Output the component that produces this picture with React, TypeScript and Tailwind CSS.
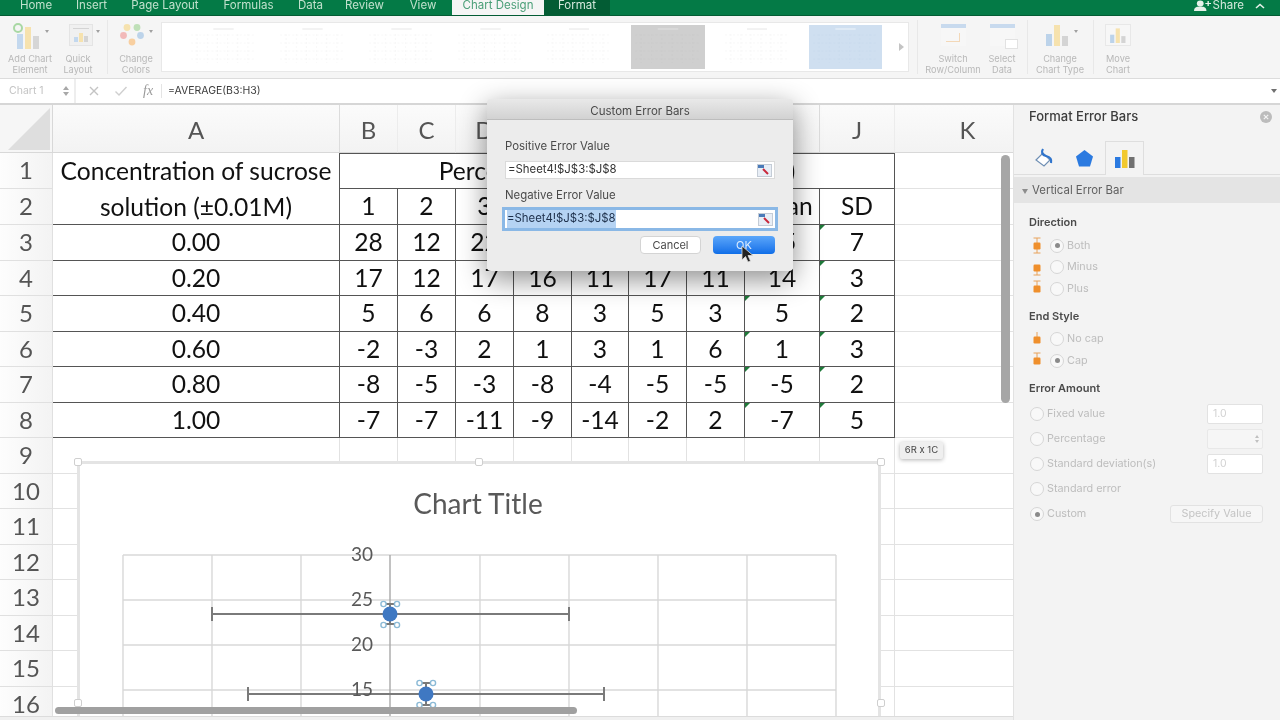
import React from "react";

const SANS = "font-['Inter','Liberation_Sans',sans-serif]";

const rowsData: string[][] = [
  ["0.00", "28", "12", "22", "17", "21", "13", "9", "15", "7"],
  ["0.20", "17", "12", "17", "16", "11", "17", "11", "14", "3"],
  ["0.40", "5", "6", "6", "8", "3", "5", "3", "5", "2"],
  ["0.60", "-2", "-3", "2", "1", "3", "1", "6", "1", "3"],
  ["0.80", "-8", "-5", "-3", "-8", "-4", "-5", "-5", "-5", "2"],
  ["1.00", "-7", "-7", "-11", "-9", "-14", "-2", "2", "-7", "5"],
];

const colHeads = ["A", "B", "C", "D", "E", "F", "G", "H", "I", "J", "K"];
const colTemplate = "grid-cols-[53px_287px_58px_58px_58px_58px_57px_58px_58px_75px_75px_146px]";

function Tab({ label, w, active, dark }: { label: string; w: string; active?: boolean; dark?: boolean }) {
  return (
    <div
      className={`${w} h-full flex items-end justify-center pb-[4px] text-[11.5px] leading-[11px] whitespace-nowrap ${
        active ? "bg-[#f5f5f5] text-[#4b9f78]" : dark ? "bg-[#035c34] text-[#d5e8dc]" : "text-[#c0e0cc]"
      }`}
    >
      {label}
    </div>
  );
}

function RibbonButton({ lines, w, children }: { lines: string[]; w: string; children: React.ReactNode }) {
  return (
    <div className={`${w} flex flex-col items-center shrink-0`}>
      <div className="h-[30px] flex items-center justify-center">{children}</div>
      <div className="mt-[4px] text-[9.2px] leading-[10.5px] text-[#b8b8b8] text-center whitespace-nowrap">
        {lines.map((l) => (
          <div key={l}>{l}</div>
        ))}
      </div>
    </div>
  );
}

function Bars({ s = 1 }: { s?: number }) {
  return (
    <svg width={28 * s} height={24 * s} viewBox="0 0 28 24">
      <rect x="3" y="11" width="6" height="12" fill="#bcd3ea" />
      <rect x="11" y="2" width="6" height="21" fill="#f6e2ae" />
      <rect x="19" y="13" width="6" height="10" fill="#d4d4d4" />
    </svg>
  );
}

function Caret() {
  return <span className="ml-[3px] mb-[8px] w-0 h-0 border-l-[2.5px] border-r-[2.5px] border-t-[3px] border-l-transparent border-r-transparent border-t-[#a0a0a0]" />;
}

function Thumb({ w, className = "bg-white", line = "#f3f3f3", title = "#e6e6e6" }: { w: string; className?: string; line?: string; title?: string }) {
  return (
    <div className={`${w} h-[44px] shrink-0 ${className}`}>
      <svg width="100%" height="100%" viewBox="0 0 72 44" preserveAspectRatio="none">
        <line x1="26" y1="4" x2="46" y2="4" stroke={title} strokeWidth="1" />
        {[10, 18, 26, 34].map((y) => (
          <line key={y} x1="4" y1={y} x2="68" y2={y} stroke={line} strokeWidth="0.6" strokeDasharray="2 2" />
        ))}
        {[10, 20, 30, 40, 50, 60].map((x) => (
          <line key={x} x1={x} y1="9" x2={x} y2="38" stroke={line} strokeWidth="0.6" strokeDasharray="2 2" />
        ))}
      </svg>
    </div>
  );
}

function Sep() {
  return <div className="w-px h-[54px] bg-[#e8e8e8] shrink-0" />;
}

function Ribbon() {
  return (
    <div className="h-[63px] bg-[#f5f5f5] border-b border-[#dcdcdc] flex items-start pt-[4px] shrink-0">
      <RibbonButton lines={["Add Chart", "Element"]} w="w-[60px]">
        <svg width="30" height="28" viewBox="0 0 30 28" className="mt-[2px]">
          <rect x="5" y="12" width="6" height="15" fill="#c3d8ee" />
          <rect x="13" y="5" width="6" height="22" fill="#f6e2ae" />
          <rect x="21" y="14" width="6" height="13" fill="#d6d6d6" />
          <circle cx="6" cy="6" r="4" fill="none" stroke="#a9d8a4" strokeWidth="2" />
        </svg>
        <Caret />
      </RibbonButton>
      <RibbonButton lines={["Quick", "Layout"]} w="w-[36px]">
        <div className="flex items-center ml-[12px]">
          <div className="w-[24px] h-[22px] bg-[#f0f0f0] border border-[#e4e4e4] flex items-end justify-center gap-[1px] pb-[3px] relative">
            <div className="absolute top-[3px] left-[3px] right-[3px] h-px bg-[#d4d4d4]" />
            <div className="w-[4px] h-[5px] bg-[#c3d8ee]" />
            <div className="w-[4px] h-[9px] bg-[#f6e2ae]" />
            <div className="w-[4px] h-[6px] bg-[#d4d4d4]" />
          </div>
          <Caret />
        </div>
      </RibbonButton>
      <div className="w-[11px] shrink-0" />
      <Sep />
      <RibbonButton lines={["Change", "Colors"]} w="w-[50px] ml-[3px]">
        <svg width="26" height="24" viewBox="0 0 26 24">
          <circle cx="7" cy="4.5" r="3.4" fill="#f6e2ae" />
          <circle cx="17" cy="4.5" r="3.4" fill="#bfe0b8" />
          <circle cx="3.5" cy="12.5" r="3.4" fill="#f2b9b9" />
          <circle cx="20.5" cy="12.5" r="3.4" fill="#bcd3ea" />
          <circle cx="12" cy="19" r="3.4" fill="#f8cfa0" />
        </svg>
        <Caret />
      </RibbonButton>
      <div className="mt-[2px] w-[748px] h-[50px] bg-white border border-[#e8e8e8] flex items-center gap-[16px] pl-[25px] shrink-0">
        <Thumb w="w-[73px]" />
        <Thumb w="w-[73px]" />
        <Thumb w="w-[73px]" />
        <Thumb w="w-[73px]" />
        <Thumb w="w-[72px]" />
        <Thumb w="w-[74px]" className="bg-[#cfcfcf]" line="#cacaca" title="#e0e0e0" />
        <Thumb w="w-[72px]" />
        <Thumb w="w-[73px]" className="bg-[#cfdff0]" line="#c8daec" title="#eef4fa" />
        <span className="ml-[1px] w-0 h-0 border-t-[4px] border-b-[4px] border-l-[5px] border-t-transparent border-b-transparent border-l-[#c4c4c4]" />
      </div>
      <div className="w-[8px] shrink-0" />
      <Sep />
      <RibbonButton lines={["Switch", "Row/Column"]} w="w-[56px] ml-[7px]">
        <div className="w-[25px] h-[22px] bg-[#f7f7f7] border-t-[4px] border-[#c8daee] flex items-center justify-center">
          <div className="w-[14px] h-[9px] border-b border-r border-[#f3d8b8]" />
        </div>
      </RibbonButton>
      <RibbonButton lines={["Select", "Data"]} w="w-[42px]">
        <div className="w-[25px] h-[22px] bg-[#f7f7f7] border-t-[4px] border-[#c8daee] relative">
          <div className="absolute right-[-3px] bottom-[-3px] w-[13px] h-[10px] bg-white border border-[#e2e2e2]" />
        </div>
      </RibbonButton>
      <div className="w-[4px] shrink-0" />
      <Sep />
      <RibbonButton lines={["Change", "Chart Type"]} w="w-[64px]">
        <Bars />
        <Caret />
      </RibbonButton>
      <div className="w-[1px] shrink-0" />
      <Sep />
      <RibbonButton lines={["Move", "Chart"]} w="w-[48px]">
        <div className="w-[26px] h-[22px] bg-[#f7f7f7] border border-[#e8e8e8] flex items-center justify-center">
          <Bars s={0.7} />
        </div>
      </RibbonButton>
    </div>
  );
}

function FormulaBar() {
  return (
    <div className="h-[24px] bg-white flex items-center shrink-0">
      <div className="w-[76px] h-full flex items-center justify-between pl-[9px] pr-[5px] border-r-2 border-[#eeeeee]">
        <span className="text-[10.5px] text-[#c4c4c4]">Chart 1</span>
        <span className="flex flex-col gap-[2px]">
          <span className="w-0 h-0 border-l-[3px] border-r-[3px] border-b-[4px] border-l-transparent border-r-transparent border-b-[#a8a8a8]" />
          <span className="w-0 h-0 border-l-[3px] border-r-[3px] border-t-[4px] border-l-transparent border-r-transparent border-t-[#a8a8a8]" />
        </span>
      </div>
      <svg width="12" height="12" viewBox="0 0 12 12" className="ml-[12px]">
        <path d="M2 2 L10 10 M10 2 L2 10" stroke="#c4c4c4" strokeWidth="1.4" />
      </svg>
      <svg width="14" height="12" viewBox="0 0 14 12" className="ml-[14px]">
        <path d="M1.5 6.5 L5 10 L12.5 2" stroke="#cfcfcf" strokeWidth="1.4" fill="none" />
      </svg>
      <span className="ml-[15px] w-[16px] text-[14px] leading-[14px] italic text-[#9a9a9a] font-['Liberation_Serif',serif]">fx</span>
      <div className="ml-[2px] w-px h-[14px] bg-[#e4e4e4]" />
      <span className="ml-[6px] text-[10.5px] text-[#3c3c3c]">=AVERAGE(B3:H3)</span>
      <span className="ml-auto mr-[3px] w-0 h-0 border-l-[3.5px] border-r-[3.5px] border-t-[4px] border-l-transparent border-r-transparent border-t-[#707070]" />
    </div>
  );
}

const gridLine = "border-r border-b border-[#e2e2e2]";
const blk = "border-r-[1.5px] border-b-[1.5px] border-[#555555]";
const cellText = "flex items-center justify-center text-[24.6px] leading-[30px] text-[#111111]";

function Sheet() {
  const cells: React.ReactNode[] = [];
  cells.push(
    <div key="corner" className="h-[48px] bg-[#f6f6f6] border-r border-b border-[#d8d8d8] relative">
      <svg width="44" height="44" viewBox="0 0 44 44" className="absolute right-[1px] bottom-[1px]">
        <path d="M43 1 V43 H1 Z" fill="#dedede" />
      </svg>
    </div>
  );
  colHeads.forEach((c) => {
    cells.push(
      <div
        key={c}
        className={`h-[48px] pt-[3px] bg-gradient-to-b from-[#fbfbfb] to-[#f3f3f3] border-b border-[#d8d8d8] flex items-center justify-center text-[24px] leading-[30px] text-[#555555] border-r ${
          c === "A" || c === "I" ? "border-r-[#dcdcdc]" : "border-r-[#ececec]"
        }`}
      >
        {c}
      </div>
    );
  });

  const H = "h-[35.5px]";
  const rh = (n: number) => (
    <div
      key={`rh${n}`}
      className={`${H} bg-gradient-to-r from-[#fdfdfd] to-[#f3f3f3] border-r border-b border-[#e0e0e0] flex items-center justify-center text-[24px] leading-[30px] text-[#555555]`}
    >
      {n}
    </div>
  );

  cells.push(rh(1));
  cells.push(
    <div key="a1" className={`row-span-2 ${blk} flex flex-col items-center justify-center text-[24.6px] leading-[35.5px] text-[#111111] whitespace-nowrap`}>
      <div>Concentration of sucrose</div>
      <div>solution (±0.01M)</div>
    </div>
  );
  cells.push(
    <div key="p1" className={`col-span-9 ${blk} border-t-[1.5px] ${H} ${cellText} [word-spacing:7px]`}>
      Percentage change in mass (%)
    </div>
  );
  cells.push(<div key="k1" className={gridLine} />);
  cells.push(rh(2));
  ["1", "2", "3", "4", "5", "6", "7", "Mean", "SD"].forEach((v) => {
    cells.push(
      <div key={`h${v}`} className={`${blk} ${H} ${cellText}`}>
        {v}
      </div>
    );
  });
  cells.push(<div key="k2" className={gridLine} />);
  rowsData.forEach((row, r) => {
    cells.push(rh(r + 3));
    row.forEach((v, c) => {
      const tri = (c === 9 && r >= 0) || (c === 8 && r >= 1);
      cells.push(
        <div key={`${r}-${c}`} className={`relative ${blk} ${H} ${cellText}`}>
          {tri && <span className="absolute left-0 top-0 w-0 h-0 border-t-[5px] border-r-[5px] border-t-[#1f7a3a] border-r-transparent" />}
          {v}
        </div>
      );
    });
    cells.push(<div key={`k${r}`} className={gridLine} />);
  });
  [9, 10, 11, 12, 13, 14, 15, 16].forEach((n) => {
    cells.push(rh(n));
    for (let c = 0; c < 10; c++) {
      cells.push(<div key={`e${n}-${c}`} className={`${gridLine} ${H}`} />);
    }
    cells.push(<div key={`ek${n}`} className={gridLine} />);
  });

  return (
    <div className="relative flex-1 min-h-0 overflow-hidden bg-white font-['Lato',sans-serif]">
      <div className={`grid ${colTemplate} auto-rows-min w-[1041px]`}>{cells}</div>
      <Chart />
      <div className="absolute left-[1001px] top-[50px] w-[9px] h-[248px] rounded-full bg-[#a6a6a6]" />
      <div className="absolute left-[55px] top-[602px] w-[522px] h-[7px] rounded-full bg-[#a0a0a0]" />
      <div className="absolute left-0 right-0 bottom-0 h-[4px] bg-[#f0f0f0] border-t border-[#dcdcdc]" />
      <div className={`absolute left-[900px] top-[337px] w-[43px] h-[17px] bg-[#efefef] rounded-[2px] shadow-[0_1px_4px_rgba(0,0,0,0.3)] flex items-center justify-center text-[9.5px] text-[#444444] ${SANS}`}>
        6R x 1C
      </div>
    </div>
  );
}

function Handle({ className }: { className: string }) {
  return <div className={`absolute w-[8px] h-[8px] rounded-[2px] bg-white border border-[#cfcfcf] ${className}`} />;
}

function Chart() {
  const ink = "#7a7a7a";
  return (
    <div className="absolute left-[77px] top-[356px] w-[804px] h-[350px] bg-white border-[3px] border-[#e4e4e4]">
      <Handle className="left-[-6px] top-[-6px]" />
      <Handle className="left-[395px] top-[-6px]" />
      <Handle className="right-[-7px] top-[-6px]" />
      <Handle className="left-[-6px] top-[235px]" />
      <Handle className="right-[-7px] top-[235px]" />
      <div className="absolute left-0 right-0 top-[21px] text-center text-[28px] leading-[36px] text-[#595959] pr-[2px]">Chart Title</div>
      <svg width="803" height="258" viewBox="0 0 803 258" className="absolute left-[-2px] top-[89px]">
        {[0, 45, 90, 135].map((y) => (
          <line key={y} x1="45" y1={y + 2} x2="758" y2={y + 2} stroke="#d8d8d8" strokeWidth="1.4" />
        ))}
        {[45, 134, 223, 312, 402, 491, 580, 669, 758].map((x) => (
          <line key={x} x1={x} y1="2" x2={x} y2="258" stroke={x === 312 ? "#a8a8a8" : "#d8d8d8"} strokeWidth="1.4" />
        ))}
        <g stroke={ink} strokeWidth="2" fill="none">
          <path d="M134 61 H491 M134 54 V68 M491 54 V68" />
          <path d="M170 141 H526 M170 134 V148 M526 134 V148" />
          <path d="M312 51 V71 M306 51 H318 M306 71 H318" />
          <path d="M348 130 V152 M342 130 H354 M342 152 H354" />
        </g>
        <circle cx="312" cy="61" r="7.5" fill="#3f78c2" />
        <circle cx="348" cy="141" r="7.5" fill="#3f78c2" />
        <g fill="white" stroke="#8cbad6" strokeWidth="1.4">
          {[
            [305.5, 51],
            [319, 51],
            [305.5, 72],
            [319, 72],
            [341.5, 130],
            [355, 130],
            [341.5, 152],
            [355, 152],
          ].map(([x, y]) => (
            <circle key={`${x}-${y}`} cx={x} cy={y} r="2.6" />
          ))}
        </g>
      </svg>
      {[
        ["30", 92],
        ["25", 137],
        ["20", 182],
        ["15", 227],
      ].map(([t, y]) => (
        <div
          key={t as string}
          style={{ top: (y as number) - 14 }}
          className="absolute left-[271px] text-[19px] leading-[24px] text-[#595959]"
        >
          {t}
        </div>
      ))}
    </div>
  );
}

function RangeIcon() {
  return (
    <svg width="15" height="13" viewBox="0 0 15 13" className="shrink-0">
      <rect x="0.5" y="0.5" width="14" height="12" fill="#e8eef6" stroke="#c4ccd6" />
      <rect x="1" y="1" width="6" height="3" fill="#4a7ab8" />
      <path d="M6 5 L11 10" stroke="#c8283c" strokeWidth="2" />
    </svg>
  );
}

function Dialog() {
  return (
    <div className={`absolute left-[487px] top-[99px] w-[306px] h-[172px] bg-[#ececec] rounded-[4px] shadow-[0_8px_28px_rgba(0,0,0,0.45)] overflow-hidden ${SANS}`}>
      <div className="h-[21px] pt-[5px] bg-gradient-to-b from-[#e9e9e9] to-[#d2d2d2] border-b border-[#bdbdbd] flex items-center justify-center text-[11.5px] text-[#4a4a4a]">
        Custom Error Bars
      </div>
      <div className="pl-[18px] pr-[18px] pt-[20px]">
        <div className="text-[11.4px] leading-[13px] text-[#4a4a4a]">Positive Error Value</div>
        <div className="mt-[8px] h-[18px] bg-white border border-[#dadada] flex items-center justify-between pl-[2px] pr-[2px] text-[11.4px] text-[#333333]">
          <span>=Sheet4!$J$3:$J$8</span>
          <RangeIcon />
        </div>
        <div className="mt-[10px] text-[11.4px] leading-[13px] text-[#4a4a4a]">Negative Error Value</div>
        <div className="mt-[8px] h-[18px] bg-white outline outline-[3px] outline-[#8ab8e6] flex items-center justify-between pl-[2px] pr-[2px] text-[11.4px] text-[#1d2f4a]">
          <span className="bg-[#b5d3f3]">=Sheet4!$J$3:$J$8</span>
          <RangeIcon />
        </div>
        <div className="mt-[8px] flex justify-end gap-[12px]">
          <div className="w-[61px] h-[18px] bg-white rounded-[4px] border border-[#d4d4d4] flex items-center justify-center text-[11px] text-[#4a4a4a]">
            Cancel
          </div>
          <div className="w-[62px] h-[18px] rounded-[4px] bg-gradient-to-b from-[#5aa6fa] to-[#0d6ee8] flex items-center justify-center text-[11px] text-[#dcecff]">
            OK
          </div>
        </div>
      </div>
    </div>
  );
}

function Radio({ on }: { on?: boolean }) {
  return (
    <span className="w-[14px] h-[14px] rounded-full bg-[#f8f8f8] border border-[#d6d6d6] flex items-center justify-center shrink-0">
      {on && <span className="w-[5px] h-[5px] rounded-full bg-[#8a8a8a]" />}
    </span>
  );
}

function ErrGlyph({ top, bottom, stemTop = true, stemBottom = true }: { top?: boolean; bottom?: boolean; stemTop?: boolean; stemBottom?: boolean }) {
  return (
    <svg width="10" height="17" viewBox="0 0 10 17" className="shrink-0">
      {stemTop && <path d="M5 1 V8" stroke="#e8a25a" strokeWidth="1" />}
      {stemBottom && <path d="M5 9 V16" stroke="#e8a25a" strokeWidth="1" />}
      {top && <path d="M1.5 1 H8.5" stroke="#e8a25a" strokeWidth="1" />}
      {bottom && <path d="M1.5 16 H8.5" stroke="#e8a25a" strokeWidth="1" />}
      <rect x="1.5" y="5.5" width="7" height="7" rx="1.2" fill="#ef8f2c" />
    </svg>
  );
}

function OptRow({ glyph, on, label }: { glyph: React.ReactNode; on?: boolean; label: string }) {
  return (
    <div className="h-[21.5px] flex items-center">
      <span className="w-[16px] flex justify-center">{glyph}</span>
      <span className="ml-[5px]"><Radio on={on} /></span>
      <span className="ml-[3px] text-[10.8px] text-[#bdbdbd]">{label}</span>
    </div>
  );
}

function AmountRow({ on, label, right }: { on?: boolean; label: string; right?: React.ReactNode }) {
  return (
    <div className="h-[25px] flex items-center">
      <span className="ml-[1px]"><Radio on={on} /></span>
      <span className="ml-[3px] text-[10.8px] text-[#bdbdbd]">{label}</span>
      {right && <div className="ml-auto">{right}</div>}
    </div>
  );
}

function NumBox({ text }: { text?: string }) {
  return (
    <div className="w-[56px] h-[20px] bg-white border border-[#e2e2e2] rounded-[2px] flex items-center pl-[5px] text-[10.5px] text-[#d2d2d2]">
      {text}
    </div>
  );
}

function Panel() {
  return (
    <div className={`w-[267px] shrink-0 bg-[#f3f3f3] border-l border-[#e2e2e2] flex flex-col overflow-hidden ${SANS}`}>
      <div className="h-[24px] shrink-0 flex items-center justify-between pl-[15px] pr-[8px]">
        <span className="text-[13px] font-medium text-[#3c3c3c]">Format Error Bars</span>
        <span className="w-[12px] h-[12px] rounded-full bg-[#bcbcbc] flex items-center justify-center">
          <svg width="6" height="6" viewBox="0 0 6 6">
            <path d="M0.8 0.8 L5.2 5.2 M5.2 0.8 L0.8 5.2" stroke="#f3f3f3" strokeWidth="1.2" />
          </svg>
        </span>
      </div>
      <div className="mt-[13px] h-[33px] shrink-0 border-b border-[#dedede] flex items-end pl-[15px]">
        <div className="w-[31px] h-[32px] flex items-center justify-center">
          <svg width="22" height="22" viewBox="0 0 22 22">
            <path d="M2 13 L9 6 L16 13 L10 19 Z" fill="white" stroke="#6f8fb4" strokeWidth="1.2" />
            <path d="M9 2 C7 5 8 8 12 9 C16 10 18 12 17 16" fill="none" stroke="#2f74cc" strokeWidth="2.2" />
          </svg>
        </div>
        <div className="ml-[9px] w-[31px] h-[32px] flex items-center justify-center">
          <svg width="19" height="19" viewBox="0 0 19 19">
            <path d="M9.5 1 L18 7.5 L15 17.5 H4 L1 7.5 Z" fill="#2b7ae0" />
          </svg>
        </div>
        <div className="ml-[5px] w-[39px] h-[34px] mb-[-1px] bg-[#f3f3f3] border border-b-0 border-[#dedede] flex items-center justify-center">
          <svg width="22" height="20" viewBox="0 0 22 20">
            <rect x="1" y="8" width="5.5" height="11" fill="#2b7ae0" />
            <rect x="8" y="1" width="5.5" height="18" fill="#f2c92e" />
            <rect x="15" y="8" width="5.5" height="11" fill="#707070" />
          </svg>
        </div>
      </div>
      <div className="mt-[2px] h-[26px] pt-[2px] shrink-0 bg-[#e4e4e4] flex items-center pl-[8px] text-[11.4px] text-[#606060]">
        <span className="w-0 h-0 border-l-[3.5px] border-r-[3.5px] border-t-[5px] border-l-transparent border-r-transparent border-t-[#8c8c8c]" />
        <span className="ml-[4px]">Vertical Error Bar</span>
      </div>
      <div className="pl-[15px] pr-[17px] pt-[13px]">
        <div className="text-[11px] leading-[13px] font-semibold text-[#4a4a4a]">Direction</div>
        <div className="mt-[6px]">
          <OptRow glyph={<ErrGlyph top bottom />} on label="Both" />
          <OptRow glyph={<ErrGlyph bottom stemTop={false} />} label="Minus" />
          <OptRow glyph={<ErrGlyph top stemBottom={false} />} label="Plus" />
        </div>
        <div className="mt-[10px] text-[11px] leading-[13px] font-semibold text-[#4a4a4a]">End Style</div>
        <div className="mt-[6px]">
          <OptRow glyph={<ErrGlyph stemBottom={false} />} label="No cap" />
          <OptRow glyph={<ErrGlyph top stemBottom={false} />} on label="Cap" />
        </div>
        <div className="mt-[10px] text-[11px] leading-[13px] font-semibold text-[#4a4a4a]">Error Amount</div>
        <div className="mt-[7px]">
          <AmountRow label="Fixed value" right={<NumBox text="1.0" />} />
          <AmountRow
            label="Percentage"
            right={
              <div className="w-[56px] h-[20px] bg-[#f6f6f6] border border-[#e8e8e8] rounded-[2px] flex items-center justify-end pr-[3px]">
                <span className="flex flex-col gap-[2px]">
                  <span className="w-0 h-0 border-l-[2px] border-r-[2px] border-b-[3px] border-l-transparent border-r-transparent border-b-[#c0c0c0]" />
                  <span className="w-0 h-0 border-l-[2px] border-r-[2px] border-t-[3px] border-l-transparent border-r-transparent border-t-[#c0c0c0]" />
                </span>
              </div>
            }
          />
          <AmountRow label="Standard deviation(s)" right={<NumBox text="1.0" />} />
          <AmountRow label="Standard error" />
          <AmountRow
            on
            label="Custom"
            right={
              <div className="w-[93px] h-[18px] bg-[#f6f6f6] border border-[#e2e2e2] rounded-[3px] flex items-center justify-center text-[10.8px] text-[#c4c4c4]">
                Specify Value
              </div>
            }
          />
        </div>
      </div>
    </div>
  );
}

export default function App() {
  return (
    <div className={`relative w-[1280px] h-[720px] overflow-hidden bg-white flex flex-col blur-[0.4px] ${SANS}`}>
      <div className="h-[16px] bg-[#047a46] border-b border-[#035c34] flex items-stretch shrink-0">
        <div className="w-[8px]" />
        <Tab label="Home" w="w-[56px]" />
        <Tab label="Insert" w="w-[55px]" />
        <Tab label="Page Layout" w="w-[92px]" />
        <Tab label="Formulas" w="w-[75px]" />
        <Tab label="Data" w="w-[49px]" />
        <Tab label="Review" w="w-[59px]" />
        <Tab label="View" w="w-[58px]" />
        <Tab label="Chart Design" w="w-[92px]" active />
        <Tab label="Format" w="w-[66px]" dark />
        <div className="ml-auto flex items-end pb-[4px] pr-[15px] text-[11.5px] leading-[11px] text-[#d5e8dc]">
          <svg width="17" height="11" viewBox="0 0 15 11" preserveAspectRatio="none">
            <circle cx="5.5" cy="3.5" r="3" fill="#e6f1ea" />
            <path d="M0 11 C0 7 3 6.5 5.5 6.5 C8 6.5 11 7 11 11 Z" fill="#e6f1ea" />
            <path d="M12.5 1 V6 M10 3.5 H15" stroke="#e6f1ea" strokeWidth="1.2" />
          </svg>
          <span className="ml-[2px]">Share</span>
          <svg width="10" height="6" viewBox="0 0 10 6" className="ml-[11px] mb-[2px]">
            <path d="M1 5 L5 1.5 L9 5" stroke="#e6f1ea" strokeWidth="1.6" fill="none" />
          </svg>
        </div>
      </div>
      <Ribbon />
      <FormulaBar />
      <div className="h-[2px] bg-[#d6d6d6] shrink-0" />
      <div className="flex-1 min-h-0 flex">
        <Sheet />
        <Panel />
      </div>
      <Dialog />
      <svg width="14" height="20" viewBox="0 0 14 20" className="absolute left-[741px] top-[245px]">
        <path d="M1 1 V15 L4.5 11.5 L7 17 L9.5 16 L7 10.5 H12 Z" fill="#222222" stroke="#dddddd" strokeWidth="0.8" />
      </svg>
    </div>
  );
}
